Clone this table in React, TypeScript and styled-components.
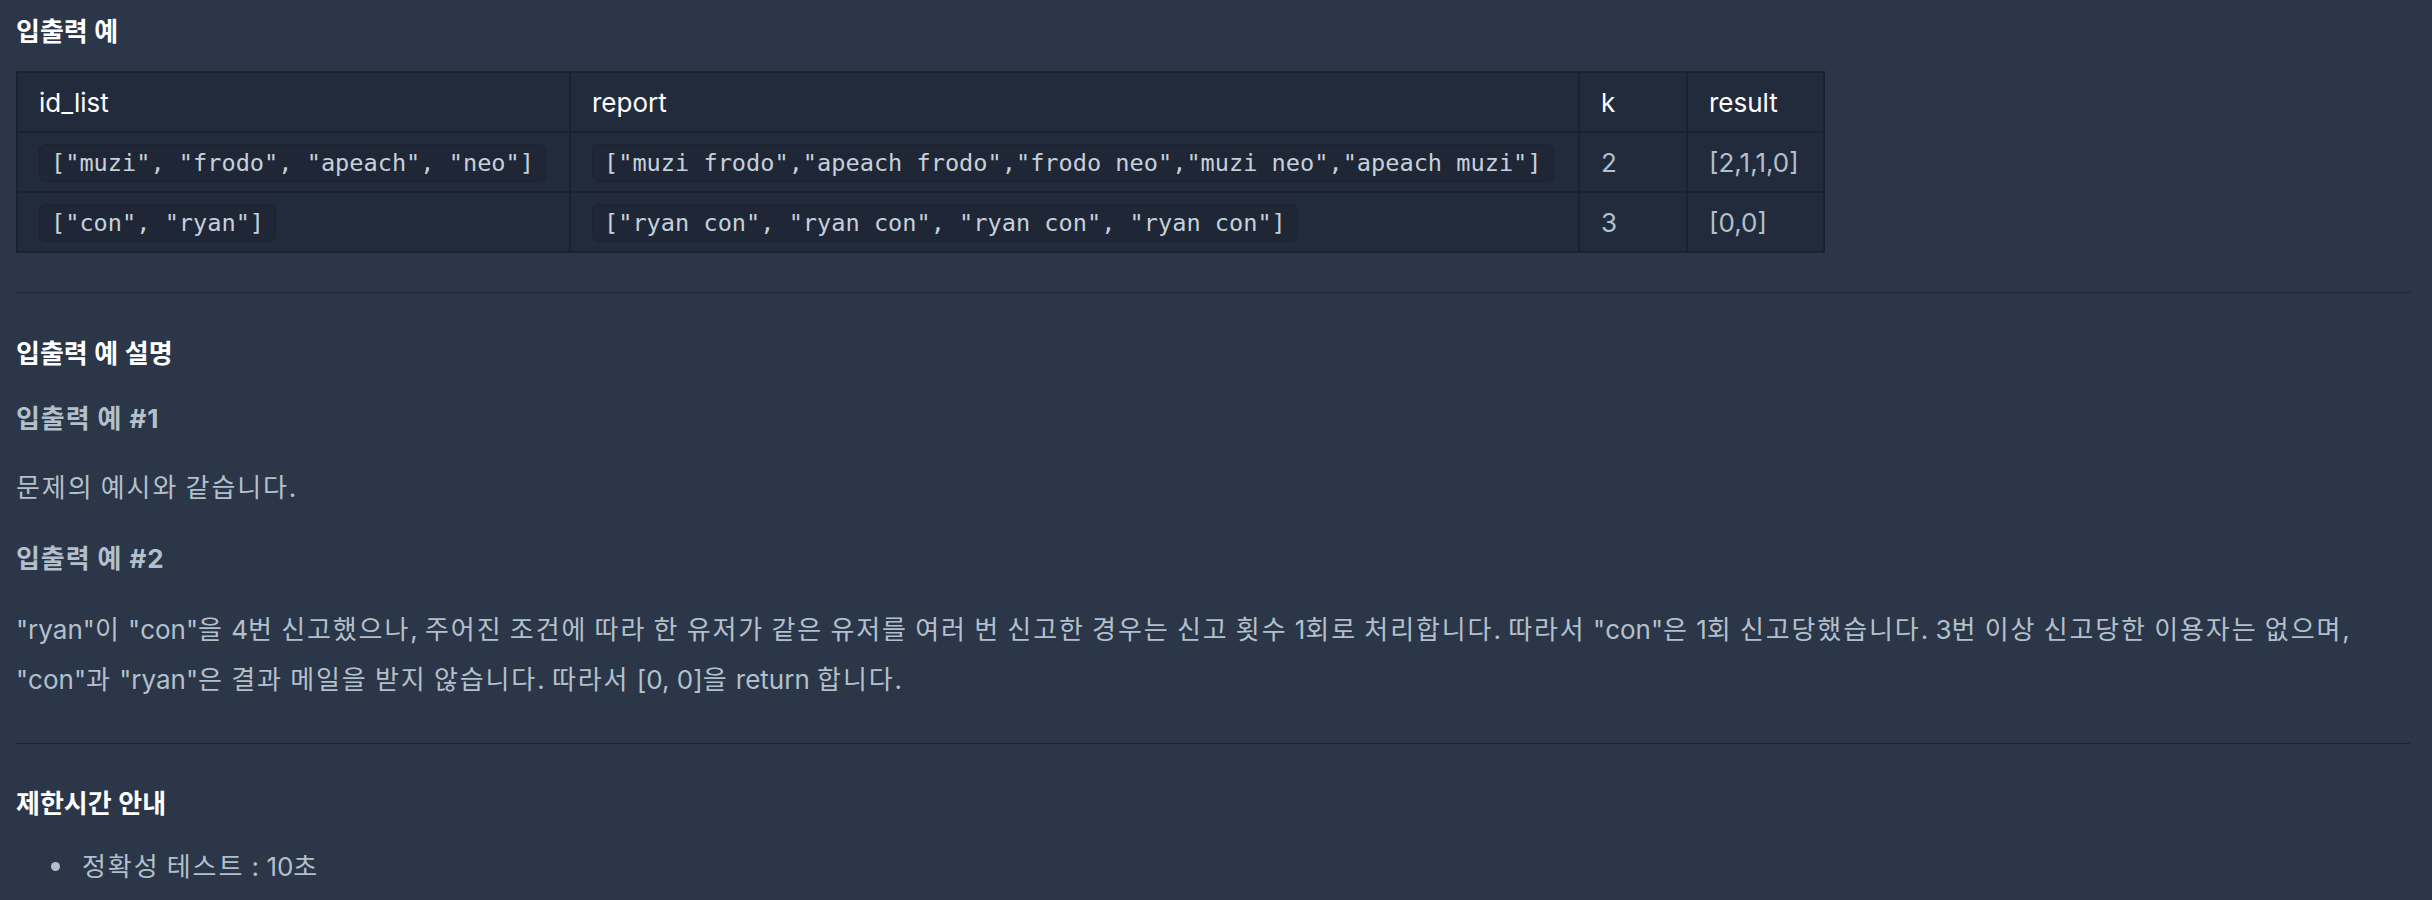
import React from "react";
import styled, { createGlobalStyle } from "styled-components";

const GlobalStyle = createGlobalStyle`
  html, body {
    margin: 0;
    padding: 0;
    background: #2b3648;
  }
  body {
    font-family: Inter, "Noto Sans CJK KR", sans-serif;
    font-size: 26px;
    color: #b2c0cc;
  }
`;

const Page = styled.div`
  padding: 12px 22px 40px 15px;
  min-height: 900px;
  box-sizing: border-box;
`;

const Title = styled.h5<{ $top?: number }>`
  margin: ${(p) => p.$top ?? 0}px 0 0 1px;
  font-size: 26px;
  line-height: 39px;
  font-weight: 600;
  color: #ffffff;
`;

const SubTitle = styled.h6<{ $top: number }>`
  margin: ${(p) => p.$top}px 0 0 1px;
  font-size: 26px;
  line-height: 39px;
  font-weight: 700;
  letter-spacing: 0.9px;
  color: #b2c0cc;
`;

const Para = styled.p<{ $top: number }>`
  margin: ${(p) => p.$top}px 0 0 1px;
  font-size: 26px;
  line-height: 50px;
  color: #b2c0cc;
`;

/* Hangul runs are set slightly wider, as in the reference's Korean face */
const Ko = styled.span`
  letter-spacing: 1.9px;
`;

const Rule = styled.hr<{ $top: number }>`
  margin: ${(p) => p.$top}px 0 0 0;
  border: none;
  height: 1px;
  background: #1d2534;
`;

const Table = styled.table`
  margin: 20px 0 0 1px;
  border-collapse: collapse;
  background: #222b3c;
  border: 2px solid #1a2231;
`;

const HeadCell = styled.th<{ $w: number }>`
  width: ${(p) => p.$w}px;
  box-sizing: border-box;
  height: 60px;
  padding: 0 21px;
  text-align: left;
  font-weight: 400;
  font-size: 26px;
  line-height: 39px;
  color: #ffffff;
  border: 2px solid #1a2231;
`;

const Cell = styled.td`
  height: 60px;
  box-sizing: border-box;
  padding: 0 21px;
  font-size: 26px;
  line-height: 39px;
  color: #b2c0cc;
  border: 2px solid #1a2231;
  white-space: nowrap;
`;

const Code = styled.code`
  display: inline-block;
  vertical-align: middle;
  font-family: "DejaVu Sans Mono", monospace;
  font-size: 23.6px;
  line-height: 28px;
  padding: 4px 11px;
  border: 1px solid #1b2332;
  border-radius: 7px;
  background: #1f2737;
  color: #c6d0da;
`;

const List = styled.ul`
  margin: 24px 0 0 0;
  padding: 0 0 0 36px;
  list-style: none;
`;

const Item = styled.li`
  display: flex;
  align-items: center;
  gap: 22px;
  font-size: 26px;
  line-height: 39px;
  color: #b2c0cc;
  &::before {
    content: "";
    flex: none;
    width: 9px;
    height: 9px;
    border-radius: 50%;
    background: #b2c0cc;
  }
`;

const HANGUL = /[\uAC00-\uD7A3]/;

function K({ children }: { children: string }) {
  const parts = children.split(/(\s+|[\uAC00-\uD7A3]+)/).filter(Boolean);
  return (
    <>
      {parts.map((p, i) =>
        HANGUL.test(p) ? <Ko key={i}>{p}</Ko> : <React.Fragment key={i}>{p}</React.Fragment>
      )}
    </>
  );
}

const rows = [
  {
    id: '["muzi", "frodo", "apeach", "neo"]',
    report: '["muzi frodo","apeach frodo","frodo neo","muzi neo","apeach muzi"]',
    k: "2",
    result: "[2,1,1,0]",
  },
  {
    id: '["con", "ryan"]',
    report: '["ryan con", "ryan con", "ryan con", "ryan con"]',
    k: "3",
    result: "[0,0]",
  },
];

const example2 =
  '"ryan"이 "con"을 4번 신고했으나, 주어진 조건에 따라 한 유저가 같은 유저를 여러 번 신고한 경우는 신고 횟수 1회로 처리합니다. 따라서 "con"은 1회 신고당했습니다. 3번 이상 신고당한 이용자는 없으며, "con"과 "ryan"은 결과 메일을 받지 않습니다. 따라서 [0, 0]을 return 합니다.';

export default function App() {
  return (
    <>
      <GlobalStyle />
      <Page>
        <Title>입출력 예</Title>
        <Table>
          <thead>
            <tr>
              <HeadCell $w={553}>id_list</HeadCell>
              <HeadCell $w={1009}>report</HeadCell>
              <HeadCell $w={108}>k</HeadCell>
              <HeadCell $w={137}>result</HeadCell>
            </tr>
          </thead>
          <tbody>
            {rows.map((r) => (
              <tr key={r.id}>
                <Cell>
                  <Code>{r.id}</Code>
                </Cell>
                <Cell>
                  <Code>{r.report}</Code>
                </Cell>
                <Cell>{r.k}</Cell>
                <Cell>{r.result}</Cell>
              </tr>
            ))}
          </tbody>
        </Table>
        <Rule $top={39} />
        <Title $top={41}>입출력 예 설명</Title>
        <SubTitle $top={26}>입출력 예 #1</SubTitle>
        <Para $top={25}>
          <K>문제의 예시와 같습니다.</K>
        </Para>
        <SubTitle $top={26}>입출력 예 #2</SubTitle>
        <Para $top={27}>
          <K>{example2}</K>
        </Para>
        <Rule $top={38} />
        <Title $top={40}>제한시간 안내</Title>
        <List>
          <Item>
            <span>
              <K>정확성 테스트 : 10초</K>
            </span>
          </Item>
        </List>
      </Page>
    </>
  );
}
